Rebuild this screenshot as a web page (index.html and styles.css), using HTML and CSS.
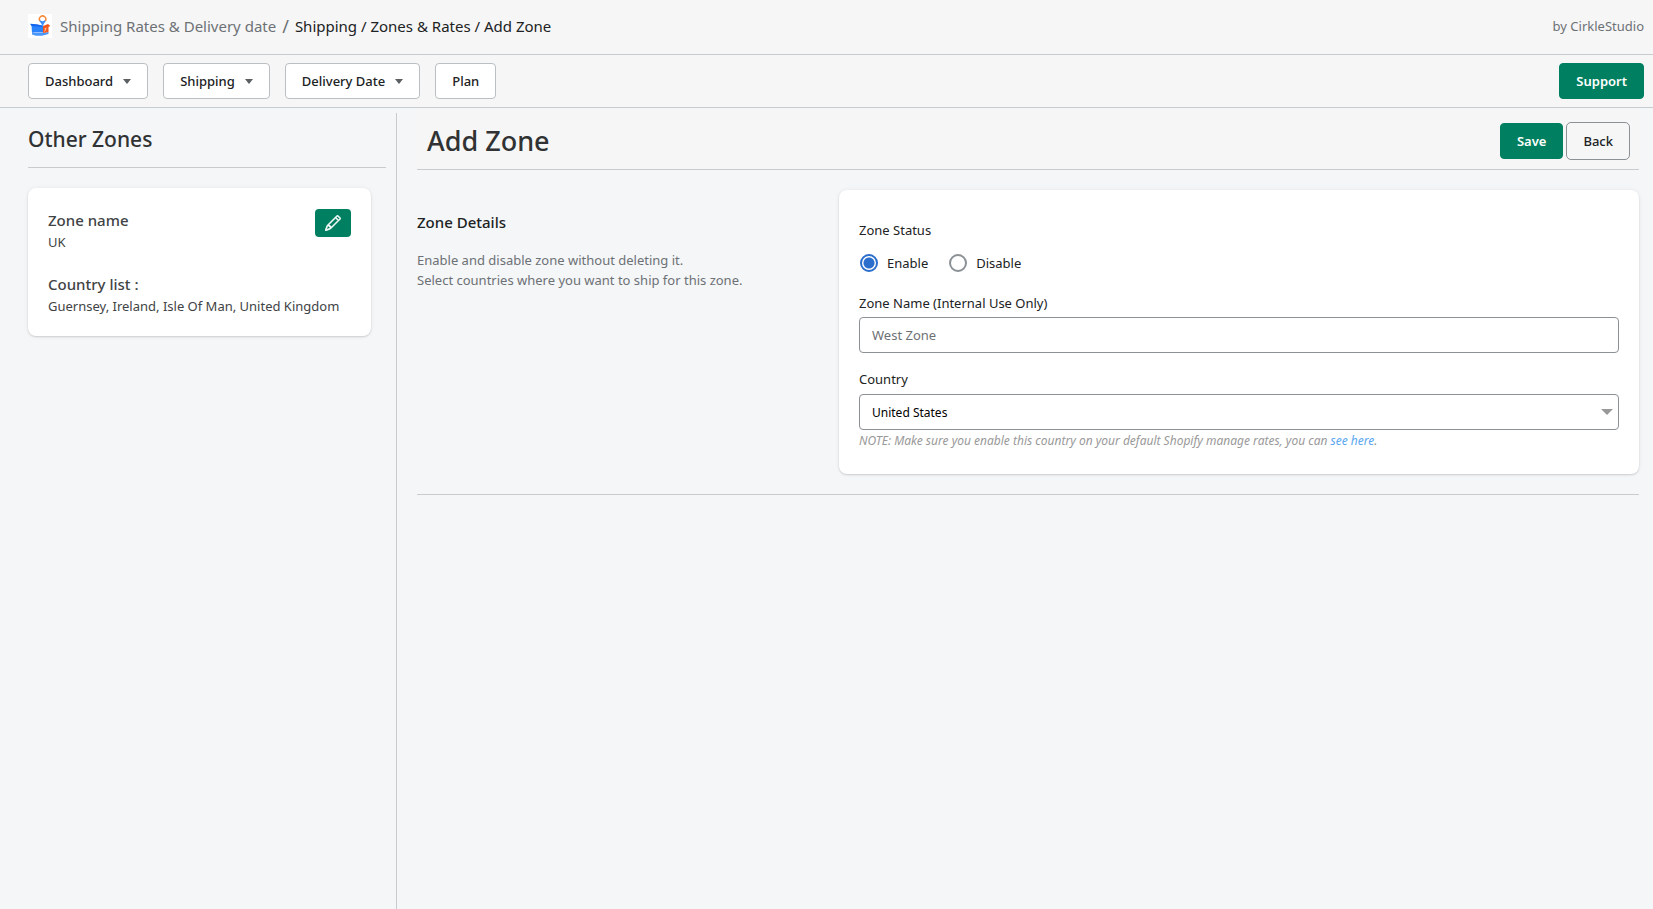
FILE: index.html
```html
<!DOCTYPE html>
<html lang="en">
<head>
<meta charset="utf-8">
<title>Add Zone</title>
<meta name="viewport" content="width=device-width, initial-scale=1">
<link rel="stylesheet" href="styles.css">
</head>
<body>
<header class="topbar">
  <svg class="logo" viewBox="0 0 24 24" aria-hidden="true">
    <rect width="24" height="24" fill="#fff"/>
    <path d="M3.500 11.500h12v7H4z" fill="#2b83fb"/>
    <path d="M2 9.800l7 .4 6 1.600-2 1-9.500-.8z" fill="#1263ee"/>
    <path d="M4 18l3 1h7l6.500-1v2l-6.500 1.800H8l-4-1.300z" fill="#4a96fb"/>
    <path d="M15 12l5-2 2.300 2-1.800 1v5l-5.500 1z" fill="#f4571d"/>
    <path d="M16.500 15l2-1M16.500 17.500l1.500-2.500" stroke="#ffc3a8" stroke-width="1"/>
    <path d="M14.600 12l-2.300-4h4.600z" fill="#3b8cfb"/>
    <circle cx="14.600" cy="5" r="3.200" fill="#fff"/>
    <path d="M12 7a3.200 3.200 0 1 1 5.200 0" fill="none" stroke="#f58a3c" stroke-width="1.600"/>
    <path d="M12 6.800a3.300 3.300 0 0 0 5.200 0" fill="none" stroke="#3b8cfb" stroke-width="1.400"/>
  </svg>
  <nav class="crumbs" aria-label="Breadcrumb">
    <a class="crumb-app" href="#">Shipping Rates &amp; Delivery date</a>
    <span class="crumb-slash">/</span>
    <span>Shipping / Zones &amp; Rates / Add Zone</span>
  </nav>
  <span class="vendor">by CirkleStudio</span>
</header>
<nav class="menubar" aria-label="Main">
  <button class="btn" type="button">Dashboard<span class="caret"></span></button>
  <button class="btn" type="button">Shipping<span class="caret"></span></button>
  <button class="btn" type="button">Delivery Date<span class="caret"></span></button>
  <button class="btn" type="button">Plan</button>
  <button class="btn btn-primary push" type="button">Support</button>
</nav>
<div class="layout">
  <aside class="sidebar">
    <h2 class="sidebar-title">Other Zones</h2>
    <section class="card zone">
      <div class="zone-text">
        <h3 class="zone-heading">Zone name</h3>
        <p class="zone-value">UK</p>
        <h3 class="zone-heading">Country list :</h3>
        <p class="zone-value">Guernsey, Ireland, Isle Of Man, United Kingdom</p>
      </div>
      <button class="edit" type="button" aria-label="Edit zone">
        <svg class="edit-icon" viewBox="0 0 16 16" fill="#fff" stroke="#fff" stroke-width=".6" aria-hidden="true"><path d="M12.146.146a.5.5 0 0 1 .708 0l3 3a.5.5 0 0 1 0 .708l-10 10a.5.5 0 0 1-.168.110l-5 2a.5.5 0 0 1-.65-.65l2-5a.5.5 0 0 1 .11-.168l10-10zM11.207 2.500 13.500 4.793 14.793 3.500 12.500 1.207 11.207 2.500zm1.586 3L10.500 3.207 4 9.707V10h.5a.5.5 0 0 1 .5.5v.5h.5a.5.5 0 0 1 .5.5v.5h.293l6.500-6.500zm-9.761 5.175-.106.106-1.528 3.821 3.821-1.528.106-.106A.5.5 0 0 1 5 12.500V12h-.5a.5.5 0 0 1-.5-.5V11h-.5a.5.5 0 0 1-.468-.325z"/></svg>
      </button>
    </section>
  </aside>
  <main class="main">
    <div class="page-head">
      <h1 class="page-title">Add Zone</h1>
      <div class="actions">
        <button class="btn btn-primary" type="button">Save</button>
        <button class="btn btn-outline" type="button">Back</button>
      </div>
    </div>
    <div class="section">
      <div class="about">
        <h2 class="about-title">Zone Details</h2>
        <p class="about-text">Enable and disable zone without deleting it.<br>Select countries where you want to ship for this zone.</p>
      </div>
      <form class="card form">
        <fieldset class="status">
          <legend class="legend">Zone Status</legend>
          <div class="choices">
            <label class="choice"><input class="radio" type="radio" name="status" checked>Enable</label>
            <label class="choice"><input class="radio" type="radio" name="status">Disable</label>
          </div>
        </fieldset>
        <div class="field">
          <label for="zone-name">Zone Name (Internal Use Only)</label>
          <input class="control" id="zone-name" type="text" placeholder="West Zone">
        </div>
        <div class="field">
          <label for="country">Country</label>
          <div class="select-wrap">
            <select class="control select" id="country"><option>United States</option></select>
          </div>
        </div>
        <p class="note">NOTE: Make sure you enable this country on your default Shopify manage rates, you can <a class="note-link" href="#">see here</a>.</p>
      </form>
    </div>
  </main>
</div>
</body>
</html>
```
FILE: styles.css
```css
* {
  box-sizing: border-box;
}

body {
  margin: 0;
  min-height: 100vh;
  display: flex;
  flex-direction: column;
  background: #f4f6f8;
  color: #202223;
  font: 13px/20px "Noto Sans", "Open Sans", sans-serif;
}

h1, h2, h3, p {
  margin: 0;
}

a {
  text-decoration: none;
}

.topbar {
  display: flex;
  align-items: center;
  gap: 8px;
  height: 55px;
  padding: 0 9px 2px 28px;
  background: #f6f6f6;
  border-bottom: 1px solid #c9cccf;
}

.logo {
  width: 24px;
  height: 24px;
}

.crumbs {
  display: flex;
  gap: 6px;
  font-size: 15px;
}

.crumb-app,
.crumb-slash,
.vendor {
  color: #6d7175;
}

.crumb-slash {
  font-size: 18px;
}

.vendor {
  margin-left: auto;
}

.menubar {
  display: flex;
  align-items: center;
  gap: 15px;
  padding: 8px 9px 8px 28px;
  background: #f6f6f6;
  border-bottom: 1px solid #c9cccf;
}

.btn {
  display: flex;
  align-items: center;
  gap: 10px;
  height: 36px;
  padding: 0 16px;
  border: 1px solid #babfc3;
  border-radius: 4px;
  background: #fff;
  color: #202223;
  font: inherit;
  font-weight: 500;
}

.btn-primary {
  border-color: #008060;
  background: #008060;
  color: #fff;
  font-weight: 600;
}

.btn-outline {
  height: 38px;
  border-color: #8c9196;
  border-radius: 5px;
  background: transparent;
}

.push {
  margin-left: auto;
}

.caret {
  border: 4px solid transparent;
  border-top: 5px solid #5c5f62;
  border-bottom: 0;
}

.layout {
  flex: 1;
  display: grid;
  grid-template-columns: 397px 1fr;
}

.sidebar {
  margin-top: 5px;
  padding: 0 10px 0 28px;
  border-right: 1px solid #c9cccf;
}

.sidebar-title {
  padding: 12px 0 14px;
  border-bottom: 1px solid #c9cccf;
  color: #303233;
  font-size: 21px;
  font-weight: 500;
  line-height: 28px;
}

.card {
  border-radius: 8px;
  background: #fff;
  box-shadow: 0 0 5px rgba(23, 24, 24, 0.05), 0 1px 2px rgba(0, 0, 0, 0.15);
}

.zone {
  display: flex;
  justify-content: space-between;
  align-items: flex-start;
  margin: 20px 15px 0 0;
  padding: 20px;
}

.zone-text {
  flex: 1;
  margin-right: -36px;
  color: #414345;
}

.zone-heading {
  font-size: 15px;
  font-weight: 500;
  line-height: 24px;
}

.zone-value + .zone-heading {
  margin-top: 20px;
}

.edit {
  display: flex;
  justify-content: center;
  align-items: center;
  width: 36px;
  height: 28px;
  margin-top: 1px;
  padding: 0;
  border: 0;
  border-radius: 4px;
  background: #008060;
}

.edit-icon {
  width: 16px;
  height: 16px;
}

.main {
  padding: 0 14px 0 20px;
}

.page-head {
  display: flex;
  justify-content: space-between;
  align-items: center;
  padding: 14px 9px 9px 10px;
  background: #f6f6f6;
  border-bottom: 1px solid #c9cccf;
}

.page-title {
  color: #303233;
  font-size: 27px;
  font-weight: 500;
  line-height: 36px;
}

.actions {
  display: flex;
  align-items: center;
  gap: 3px;
}

.section {
  display: grid;
  grid-template-columns: 1fr 2fr;
  gap: 22px;
  padding: 20px 0;
  border-bottom: 1px solid #c9cccf;
}

.about {
  padding-top: 20px;
}

.about-title {
  font-size: 15px;
  font-weight: 500;
  line-height: 24px;
}

.about-text {
  margin-top: 16px;
  color: #6d7175;
}

.form {
  padding: 30px 20px 23px;
}

.status {
  margin: 0 0 20px;
  padding: 0;
  border: 0;
}

.legend {
  padding: 0;
}

.choices {
  display: flex;
  gap: 20px;
  margin-top: 13px;
}

.choice {
  display: flex;
  align-items: center;
  gap: 9px;
}

.radio {
  appearance: none;
  width: 18px;
  height: 18px;
  margin: 0 0 0 1px;
  border: 2px solid #8c9196;
  border-radius: 50%;
  background: #fff;
}

.radio:checked {
  border-color: #2c6ecb;
  background: radial-gradient(circle, #2c6ecb 5px, #fff 6px);
}

.field {
  display: flex;
  flex-direction: column;
  gap: 4px;
}

.field + .field {
  margin-top: 16px;
}

.control {
  width: 100%;
  height: 36px;
  padding: 0 12px;
  border: 1px solid #8c9196;
  border-radius: 4px;
  background: #fff;
  color: #202223;
  font: inherit;
  appearance: none;
}

.control::placeholder {
  color: #6d7175;
}

.select-wrap {
  position: relative;
  display: flex;
  padding-top: 1px;
}

.select {
  padding-top: 2px;
  color: #000;
  font-size: 12px;
}

.select-wrap::after {
  content: "";
  position: absolute;
  top: 16px;
  right: 6px;
  border: 6px solid transparent;
  border-top-color: #999;
  border-bottom: 0;
  pointer-events: none;
}

.note {
  margin-top: 1px;
  color: #999;
  font-size: 12px;
  font-style: italic;
}

.note-link {
  color: #58a6f0;
}
```
